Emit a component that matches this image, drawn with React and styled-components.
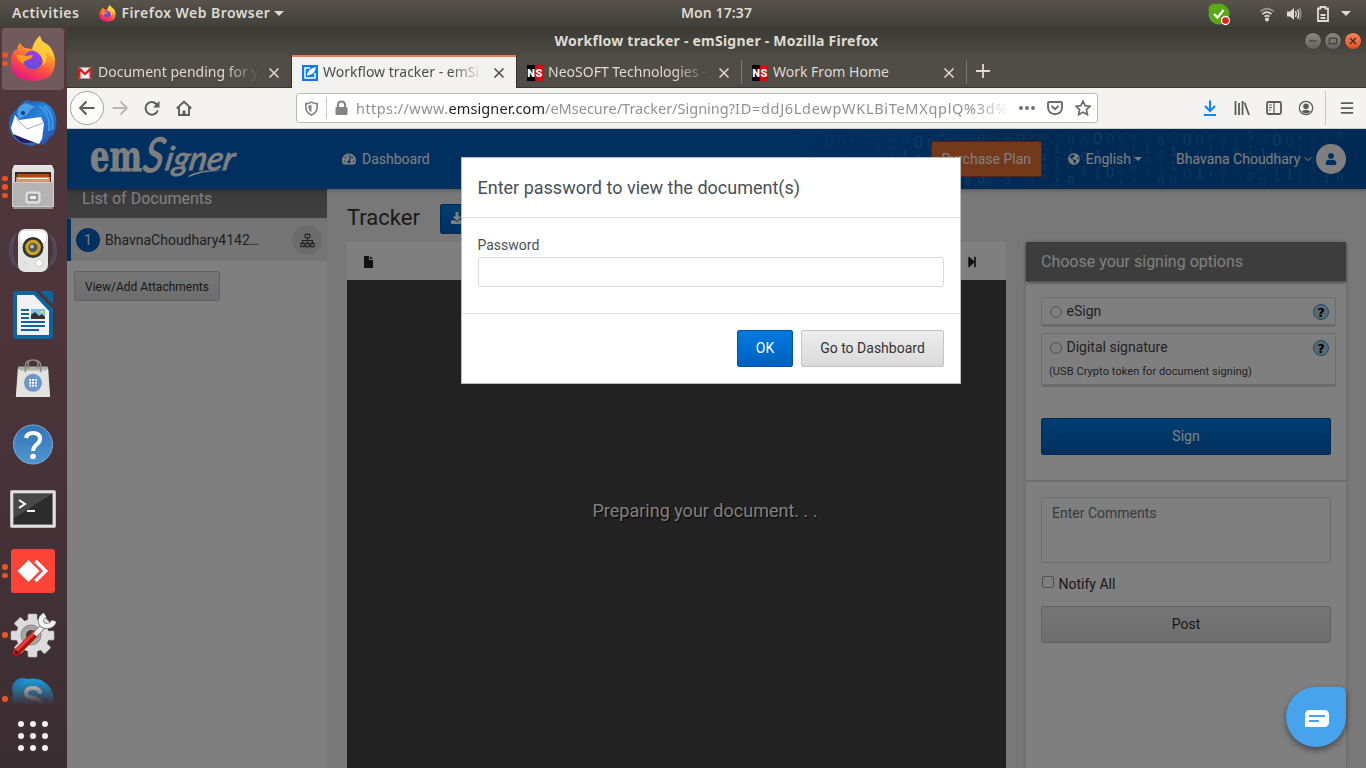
import React from "react";
import styled, { createGlobalStyle } from "styled-components";
import { FaTachometerAlt, FaGlobeAmericas, FaUser, FaDownload, FaStepForward } from "react-icons/fa";

const ui = `"Noto Sans", "Open Sans", sans-serif`;

const GlobalStyle = createGlobalStyle`
  * { box-sizing: border-box; }
  html, body { margin: 0; padding: 0; }
  body { width: 1366px; height: 768px; overflow: hidden; font-family: Roboto, sans-serif; font-size: 14px; }
  button, input, textarea { font-family: inherit; margin: 0; }
  svg { display: block; flex: none; }
`;

/* ---------- desktop shell ---------- */
const Desktop = styled.div`
  width: 1366px; height: 768px; display: flex; flex-direction: column; overflow: hidden; background: #3a3935;
`;
const TopBar = styled.header`
  height: 27px; flex: none; display: grid; grid-template-columns: 681px auto 1fr; align-items: center;
  background: linear-gradient(#57534b, #403f3a); color: #dfdbd2; font: 600 14px ${ui};
`;
const TopLeft = styled.div`display: flex; align-items: center; padding-left: 12px;`;
const TopRight = styled.div`display: flex; align-items: center; justify-content: flex-end; padding-right: 15px;`;
const Label = styled.span`
  white-space: pre; letter-spacing: ${(p) => p.$ls || 0}px; margin-left: ${(p) => p.$ml || 0}px; line-height: 20px;
  padding-bottom: ${(p) => p.$pb || 0}px;
`;
const Caret = styled.i`
  width: 0; height: 0; border: ${(p) => p.$s || 5}px solid transparent; border-bottom: 0; border-top-color: currentColor;
  margin-left: ${(p) => p.$ml || 0}px;
`;
const Body = styled.div`flex: 1; min-height: 0; display: flex;`;
const Dock = styled.nav`
  width: 67px; flex: none; display: flex; flex-direction: column;
  background: linear-gradient(#52393d, #4a343a 45%, #3b2e33);
`;
const DockList = styled.div`height: 677px; overflow: hidden; position: relative;
  &::after { content: ""; position: absolute; left: 0; right: 0; bottom: 0; height: 26px; background: linear-gradient(rgba(62,47,52,0), #3f3035); }
`;
const DockItem = styled.div`
  height: 64px; display: flex; align-items: center; padding-left: 2px;
`;
const Dots = styled.div`
  width: 6px; flex: none; display: flex; flex-direction: column; gap: 3px; margin-right: -6px; z-index: 1;
  i { width: 5.5px; height: 5.5px; border-radius: 50%; background: #e95420; }
`;
const Tile = styled.div`
  width: 62px; height: 62px; border-radius: 4px; display: flex; align-items: center; justify-content: center;
  padding-top: ${(p) => p.$drop || 0}px;
  background: ${(p) => (p.$on ? "#705a5d" : "transparent")};
`;
const AppsButton = styled.div`
  height: 64px; display: grid; grid-template-columns: repeat(3, 6px); gap: 6px; place-content: center; padding-right: 2px;
  i { width: 6px; height: 6px; border-radius: 50%; background: #f2f1f0; }
`;

/* ---------- browser chrome ---------- */
const Window = styled.div`flex: 1; min-width: 0; display: flex; flex-direction: column;`;
const TitleBar = styled.div`
  height: 28px; flex: none; display: grid; grid-template-columns: 1fr auto 1fr; align-items: center;
  background: linear-gradient(#3a3935, #4c4a43); color: #dfdbd2; font: 700 14px ${ui};
`;
const WinButtons = styled.div`display: flex; gap: 4px; justify-content: flex-end; padding-right: 5px;`;
const WinButton = styled.div`
  width: 16px; height: 16px; border-radius: 50%; display: flex; align-items: center; justify-content: center;
  background: ${(p) => (p.$close ? "linear-gradient(#f5845b, #e2511f)" : "linear-gradient(#8a8880, #65635c)")};
  box-shadow: 0 0 0 .5px #2c2b28;
`;
const TabStrip = styled.div`
  height: 33px; flex: none; display: flex; background: #504d46; border-bottom: 1px solid #3a3833;
`;
const Tab = styled.div`
  width: 225px; flex: none; display: flex; align-items: center; padding: 0 12px 0 10px; font: 400 14px ${ui};
  color: ${(p) => (p.$active ? "#4c4c4c" : "#dfdbd2")};
  background: ${(p) => (p.$active ? "#f3f2f1" : "transparent")};
  border-top: 2px solid ${(p) => (p.$active ? "#ee7c52" : "transparent")};
  height: 33px;
  ${(p) => p.$active && "width: 224px; margin-right: 1px; padding-right: 11px; box-shadow: -1px 0 0 #33312d, 1px 0 0 #33312d;"}
`;
const TabText = styled.span`
  flex: 1; min-width: 0; white-space: pre; margin: 0 9px 0 5px; padding-bottom: 2px; line-height: 22px;
  ${(p) => p.$fade && "mask-image: linear-gradient(90deg, #000 calc(100% - 34px), transparent);"}
`;
const TabRule = styled.i`width: 1px; height: 24px; margin: 5px 0 0 -1px; background: #7b7870;`;
const NewTab = styled.div`width: 32px; display: flex; align-items: center; justify-content: center;`;
const NavBar = styled.div`
  height: 41px; flex: none; display: flex; align-items: center; background: #f4f3f2; border-bottom: 1px solid #cfcdca;
  color: #5c5c5b;
`;
const Slot = styled.div`
  width: ${(p) => p.$w || 32}px; flex: none; display: flex; align-items: center; justify-content: center; color: ${(p) => p.$c || "inherit"};
  margin-left: ${(p) => p.$ml || 0}px;
`;
const BackButton = styled.div`
  width: 34px; height: 34px; flex: none; margin: 0 0 0 3px; border-radius: 50%; border: 1px solid #a5a4a2; background: #fcfcfb; display: flex; align-items: center; justify-content: center;
`;
const UrlBox = styled.div`
  width: 802px; flex: none; height: 30px; margin: 0 96px; background: #fff; border: 1px solid #bfbcb9; border-radius: 3px;
  display: flex; align-items: center; color: #858484; font: 400 14.5px ${ui};
`;
const UrlText = styled.span`
  width: 654px; flex: none; white-space: pre; color: #929191; line-height: 24px; letter-spacing: .42px;
  mask-image: linear-gradient(90deg, #000 calc(100% - 36px), transparent);
  b { font-weight: 400; color: #1f1f1f; letter-spacing: .1px; }
  i { font-style: normal; letter-spacing: 0; }
  em { font-style: normal; letter-spacing: .7px; }
`;
const Rule = styled.i`width: 1px; height: ${(p) => p.$h}px; background: #c9c8c6; flex: none;`;

/* ---------- web page ---------- */
const Page = styled.div`
  flex: 1; min-height: 0; position: relative; overflow: hidden; display: flex; flex-direction: column; background: #f0f0f0; color: #333;
`;
const SiteHeader = styled.div`
  height: 60px; flex: none; display: flex; align-items: center; position: relative; background: #0060c0; color: #fff;
  box-shadow: 0 1px 4px rgba(0,0,0,.35); z-index: 1;
`;
const DigitArt = styled.svg`position: absolute; right: 0; top: 0;`;
const Logo = styled.div`width: 275px; flex: none; padding-left: 23px;`;
const NavLink = styled.div`display: flex; align-items: center; position: relative; margin-left: ${(p) => p.$ml || 0}px;`;
const PurchaseButton = styled.button`
  position: relative; width: 111px; height: 36px; margin-left: 501px; padding: 0; border: 1px solid #c03c0c; border-radius: 2px; background: #e87034; color: #fff; font-size: 14px;
`;
const Avatar = styled.div`
  width: 30px; height: 30px; margin-left: 4px; border-radius: 50%; background: #fff; color: #0060c0; display: flex; align-items: center; justify-content: center;
`;
const Chevron = styled.svg`margin-left: 4px;`;
const Content = styled.div`flex: 1; min-height: 0; display: flex;`;
const Sidebar = styled.aside`width: 260px; flex: none; background: #fff;`;
const SidebarHead = styled.div`
  height: 29px; padding: 0 15px; background: linear-gradient(#747474, #7e7e7e); color: #fff; font-size: 16px; line-height: 19px;
`;
const DocRow = styled.div`
  height: 43px; display: flex; align-items: center; padding-right: 5px; background: #ebebeb; border-left: 4px solid #0060c0; border-top: 1px solid #ddd; color: #404040;
`;
const Count = styled.span`
  width: 24px; height: 24px; margin: 0 5px; border-radius: 50%; background: #0060c0; color: #fff; text-align: center; line-height: 24px;
`;
const DocName = styled.span`flex: 1;`;
const RoundIcon = styled.span`
  width: 30px; height: 30px; border-radius: 50%; background: #d8d8d8; display: flex; align-items: center; justify-content: center;
`;
const GreyButton = styled.button`
  display: block; height: ${(p) => p.$h}px; width: ${(p) => p.$w}px; padding: ${(p) => p.$p || "0 0 2px"}; border: 1px solid #c4c4c4; border-radius: 2px;
  background: linear-gradient(#ededed, #dadada); color: #333; font-size: ${(p) => p.$fs || 14}px; margin: ${(p) => p.$m || 0};
`;
const BlueButton = styled.button`
  display: flex; align-items: center; justify-content: center; flex: none; height: ${(p) => p.$h}px; width: ${(p) => p.$w}px; padding: 0 0 2px; border: 1px solid #0052a6; border-radius: 2px;
  background: linear-gradient(#007be0, #0060c0); color: #fff; font-size: 14px;
`;
const Main = styled.main`width: 659px; margin-left: 20px; display: flex; flex-direction: column;`;
const TitleRow = styled.div`height: 53px; flex: none; display: flex; padding-top: 15px;`;
const PageTitle = styled.h1`margin: 0 20px 0 0; font-weight: 400; font-size: 22px; line-height: 27px; width: 73px; color: #333; white-space: nowrap;`;
const ViewerBar = styled.div`
  height: 38px; flex: none; display: flex; align-items: center; justify-content: space-between; padding: 2px 28px 0 17px; background: #fff; color: #222;
`;
const Viewer = styled.div`
  flex: 1; background: #444; color: #fff; font-size: 18px; text-align: center; padding: 221px 0 0 57px; line-height: 20px; text-shadow: 1px 1px 1px #000;
`;
const Panel = styled.section`
  width: 320px; margin: 53px 20px 0; background: #fff; display: flex; flex-direction: column; box-shadow: 0 0 4px rgba(0,0,0,.2);
`;
const PanelHead = styled.div`
  height: 39px; flex: none; padding: 0 15px; background: #7a7a7a; color: #fff; font-size: 16px; line-height: 39px; box-shadow: 0 2px 3px rgba(0,0,0,.4);
`;
const Options = styled.div`padding: 16px 10px 0 15px; height: 137px; display: flex; flex-direction: column; gap: 6px;`;
const Option = styled.div`
  height: ${(p) => p.$h}px; padding: 4px 6px 0 8px; border: 1px solid #dadada; border-bottom: 3px solid #d6d6d6; border-radius: 3px; color: #444; line-height: 17px;
`;
const OptionLine = styled.div`display: flex; align-items: center; > span { flex: 1; }`;
const Radio = styled.i`width: 12px; height: 12px; margin-right: 4.5px; margin-top: 2px; border: 1px solid #a2a2a2; border-radius: 50%;`;
const Help = styled.b`
  width: 16px; height: 16px; margin-top: 2px; border: 1px solid #3b93c4; border-radius: 50%; background: #b4d4ea; color: #000; font: 900 13px/15px "DejaVu Sans", sans-serif; text-align: center;
`;
const Hint = styled.div`font-size: 11px; line-height: 14px; margin: 9px 0 0 -1px; letter-spacing: .08px;`;
const Divided = styled.div`padding: 0 15px 25px; border-bottom: 2px solid #dadada;`;
const Comments = styled.div`padding: 15px;`;
const CommentBox = styled.div`height: 66px; border: 1px solid #d9d9d9; border-radius: 3px; padding: 7px 10px; line-height: 16px; color: #6c757d;`;
const Notify = styled.div`display: flex; height: 43px; padding: 12px 0 0 1px; gap: 4.5px; line-height: 18px;
  i { width: 12px; height: 12px; margin-top: 1px; border: 1px solid #9c9c9c; border-radius: 2px; }
`;
const Backdrop = styled.div`
  position: absolute; inset: 0; z-index: 2; background: rgba(0,0,0,.5); display: flex; justify-content: center; align-items: flex-start; padding: 28px 11px 0 0;
`;
const Dialog = styled.div`width: 500px; height: 227px; background: #fff; border: 1px solid #bcbcbc; color: #495057;`;
const DialogHead = styled.div`height: 60px; padding: 0 15.5px; font-size: 18px; line-height: 60px; border-bottom: 1px solid #dee2e6;`;
const DialogBody = styled.div`height: 96px; padding: 19px 16px 0 15.5px; border-bottom: 1px solid #dee2e6; line-height: 16px;`;
const PasswordInput = styled.input`display: block; width: 466.5px; height: 30px; margin-top: 4px; border: 1px solid #dadada; border-radius: 3px; background: #fff; outline: 0;`;
const DialogFoot = styled.div`display: flex; justify-content: flex-end; gap: 8px; padding: 16px;`;
const Chat = styled.div`
  position: absolute; z-index: 3; right: 20px; bottom: 21px; width: 60px; height: 60px; border-radius: 30px 6px 30px 30px; background: #47a3ec;
  box-shadow: 0 3px 6px rgba(0,0,0,.45); display: flex; align-items: center; justify-content: center; padding: 3px 0 0 2px;
`;

/* ---------- icons ---------- */
const FirefoxIcon = ({ size, id }) => (
  <svg width={size} height={size} viewBox="0 0 46 46">
    <defs>
      <linearGradient id={id + "a"} x1=".8" y1="0" x2=".3" y2="1"><stop offset="0" stopColor="#fff44f" /><stop offset=".35" stopColor="#ffa027" /><stop offset=".65" stopColor="#ff4f40" /><stop offset="1" stopColor="#e31587" /></linearGradient>
      <linearGradient id={id + "b"} x1=".7" y1="0" x2=".3" y2="1"><stop offset="0" stopColor="#a23be0" /><stop offset="1" stopColor="#5b50dd" /></linearGradient>
    </defs>
    <path fill={`url(#${id}a)`} d="M10 7q2 4 5 5l7 1Q24 4 30 0q1 6 8 9 7 6 7 17 0 19-22 19T1 26q0-9 5-13l1 2q0-5 3-8z" />
    <circle cx="23" cy="24" r="9.500" fill={`url(#${id}b)`} />
    <path fill="#ffcf3f" d="M30 0q1 6 8 9 6 6 7 17-3-8-9-9 2 8-3 13 1-12-11-16 3-9 8-14z" opacity=".85" />
    <path fill="#ff9a22" d="M6 19q5-1 9 1l8-1q-1 4-6 5-4 1-4 4-5-3-7-9z" />
  </svg>
);
const Thunderbird = () => (
  <svg width="50" height="50" viewBox="0 0 50 50">
    <defs><linearGradient id="tb" x1="0" y1="0" x2="1" y2="1"><stop offset="0" stopColor="#1553a4" /><stop offset=".5" stopColor="#2a83d8" /><stop offset="1" stopColor="#2447a4" /></linearGradient></defs>
    <path fill="url(#tb)" d="M12 8Q15 1 23 2l-2 2q20-4 26 12 4 13-3 23l-2-1q-3 8-9 9l-1-2-8 3Q8 46 3 35-2 22 6 14z" />
    <path fill="#2b1b66" d="M4 34q4 9 12 11l18-1-20-9z" />
    <path fill="#fff" d="M7 17l4 5 22-3 3 7-2 15-3 5q-14-5-26-10l-2-6z" />
    <path fill="none" stroke="#8b94a3" strokeWidth=".8" d="M8 20l11 11 16-6" />
    <path fill="#4aa0e4" d="M11 21l-2-6q1-8 9-10l10 4q-6 1-8 7z" />
    <circle cx="15" cy="15" r="2" fill="#173b74" />
    <path fill="none" stroke="#3aa0ec" strokeWidth="2" d="M31 8q12 7 10 25M36 8q11 9 8 24" />
  </svg>
);
const Files = () => (
  <svg width="42" height="44" viewBox="0 0 42 44">
    <defs><linearGradient id="fl" x1="0" y1="0" x2="0" y2="1"><stop offset="0" stopColor="#e6e6e6" /><stop offset="1" stopColor="#b0b0b0" /></linearGradient></defs>
    <path fill="url(#fl)" d="M2 0h38l2 5v37H0V5z" />
    <path fill="#3b2a22" d="M3 7h36v10H3z" /><path fill="#b8440f" d="M5 9h32v3H5z" /><path fill="#ee8f4c" d="M4 12h34v5H4z" /><path stroke="#fff" d="M6 13.500h30" />
    <path fill="#b4b4b4" d="M0 17h42v25H0z" /><path fill="none" stroke="#cfcfcf" d="M.5 17.500h41v24H.5z" /><path fill="#8c8c8c" d="M1 42h40v2H1z" />
    <rect x="14" y="27" width="14" height="11" rx="2" fill="#d4d4d4" stroke="#e7e7e7" /><rect x="17" y="30" width="8" height="5" fill="#eee" stroke="#555" />
  </svg>
);
const Speaker = () => (
  <svg width="50" height="46" viewBox="0 0 50 46">
    <g fill="none" stroke="#5e6d8e" strokeWidth="1.600" opacity=".45"><path d="M8 6q-9 17 2 34M5 9q-7 14 1 28M42 6q9 17-2 34M45 9q7 14-1 28" /></g>
    <rect x="10" y="1" width="30" height="43" rx="7" fill="#e4e4e2" /><rect x="12" y="3" width="26" height="12" rx="5" fill="#fff" />
    <circle cx="25" cy="19.500" r="10.500" fill="#333" /><circle cx="25" cy="19.500" r="7.800" fill="#c9a21d" /><circle cx="25" cy="19.500" r="4.500" fill="#555" /><circle cx="24" cy="18.500" r="2" fill="#bbb" />
    <circle cx="31" cy="35" r="3.500" fill="#fff" stroke="#ccc" /><circle cx="17" cy="36" r="2.500" fill="#ddd" />
  </svg>
);
const Writer = () => (
  <svg width="42" height="50" viewBox="0 0 42 50">
    <path fill="#0e659e" d="M3 1h20l18 18v27q0 3-3 3H4q-3 0-3-3V3q0-2 2-2z" /><path fill="#f2f2f2" d="M5 5h17l15 16v24H5z" /><path fill="#0e659e" d="M28 1h11q2 0 2 2v11z" />
    <path stroke="#0e659e" strokeWidth="2" d="M9 20h8M9 24h8M9 28h8M9 32h24M9 36h24M9 40h18" /><rect x="19" y="19" width="14" height="10" fill="#7fc0ea" /><path fill="#333" d="M19 29v-4l4-3 4 4 3-2 3 3v2z" /><circle cx="30" cy="22" r="1.500" fill="#f7d64a" />
  </svg>
);
const Bag = () => (
  <svg width="38" height="44" viewBox="0 0 40 46">
    <path fill="#c8c8c4" d="M5 10h30l3 32H2z" /><path fill="#e2e3de" d="M4 12h32l2 30H2z" /><path fill="#aeb0aa" d="M4 10h32l-2 4H6z" />
    <path fill="none" stroke="#888a84" strokeWidth="1.600" d="M12 16V9q0-6 8-6t8 6v7M15 12V6q0-3 5-3t5 3v6" />
    <circle cx="20" cy="27" r="9.500" fill="#6f97c8" />
    {[0, 1, 2].map((r) => [0, 1, 2].map((c) => <rect key={r + "" + c} x={16 + c * 3} y={23 + r * 3} width="2" height="2" fill="#fff" />))}
  </svg>
);
const HelpIcon = () => (
  <svg width="42" height="42" viewBox="0 0 42 42">
    <defs><linearGradient id="hp" x1="0" y1="0" x2="0" y2="1"><stop offset="0" stopColor="#3373b8" /><stop offset="1" stopColor="#4f96cf" /></linearGradient></defs>
    <circle cx="21" cy="20.500" r="19.500" fill="url(#hp)" stroke="#7bb0dc" />
    <path fill="none" stroke="#fff" strokeWidth="4" d="M14 14q1-5 7-5 7 0 7 6 0 3-4 6-3 3-3 6" /><circle cx="21" cy="32.500" r="2.800" fill="#fff" />
  </svg>
);
const TerminalIcon = () => (
  <svg width="46" height="38" viewBox="0 0 46 38">
    <rect x=".5" y=".5" width="45" height="37" rx="1" fill="#e1e1e1" stroke="#bbb" /><rect x="3.500" y="3.500" width="39" height="31" fill="#2c2c2c" stroke="#777" /><path fill="#484848" d="M4 4h38L4 28z" />
    <path fill="none" stroke="#fff" strokeWidth="2" d="M9 10l6 4-6 4M17 21h8" />
  </svg>
);
const AnyDesk = () => (
  <svg width="44" height="44" viewBox="0 0 44 44"><rect width="44" height="44" rx="3" fill="#fb4338" /><path fill="#fff" d="M17.500 11l11 11-11 11-11-11z" /><path fill="none" stroke="#fff" strokeWidth="3.500" d="M24.500 12l10 10-10 10" /></svg>
);
const Tools = () => (
  <svg width="46" height="46" viewBox="0 0 46 46">
    <g fill="#dcdcdc" stroke="#b5b5b5" strokeWidth=".6">{[0, 45, 90, 135, 180, 225, 270, 315].map((a) => <rect key={a} x="18" y="2" width="9" height="9" rx="1" transform={`rotate(${a} 22.500 23.500)`} />)}<circle cx="22.500" cy="23.500" r="16.500" stroke="none" /></g>
    <circle cx="21" cy="23" r="10" fill="#a5a5a5" stroke="#858585" /><circle cx="21" cy="23" r="5" fill="#4a3a3e" />
    <path stroke="#b0120d" strokeWidth="7" strokeLinecap="round" d="M6 41L25 22" /><path stroke="#e0423a" strokeWidth="3" strokeLinecap="round" d="M5 40L24 21" />
    <path stroke="#777" strokeWidth="6" d="M26 22l8-9" /><path stroke="#ececec" strokeWidth="4.500" d="M25 23l9-10" />
    <path fill="none" stroke="#777" strokeWidth="6" d="M35 3q-5 3-4 7t6 4q5 0 7-5" /><path fill="none" stroke="#f2f2f2" strokeWidth="4.500" d="M35 3q-5 3-4 7t6 4q5 0 7-5" /><circle cx="6" cy="40" r="1.500" fill="#400" />
  </svg>
);
const SkypeIcon = () => (
  <svg width="44" height="44" viewBox="0 0 44 44">
    <circle cx="12" cy="12" r="11" fill="#1d8fd8" /><circle cx="22" cy="22" r="20.500" fill="#16a3e0" /><circle cx="32" cy="32" r="11" fill="#0c86c8" />
    <path fill="none" stroke="#e8eef2" strokeWidth="4" strokeLinecap="round" d="M29 15q-2-4-7-4-7 0-7 5 0 4 7 5 8 2 8 6 0 6-8 6-6 0-8-5" />
  </svg>
);
const dockApps = [
  { icon: <FirefoxIcon size={46} id="fxd" />, dots: 2, on: true }, { icon: <Thunderbird />, dots: 0 }, { icon: <Files />, dots: 3 }, { icon: <Speaker />, dots: 0 },
  { icon: <Writer />, dots: 0 }, { icon: <Bag />, dots: 0 }, { icon: <HelpIcon />, dots: 0, drop: 3 }, { icon: <TerminalIcon />, dots: 0, drop: 4 },
  { icon: <AnyDesk />, dots: 2 }, { icon: <Tools />, dots: 1 }, { icon: <SkypeIcon />, dots: 1 },
];

const Svg = ({ s = 16, w = 2, children, ...rest }) => (
  <svg width={s} height={s} viewBox="0 0 16 16" fill="none" stroke="currentColor" strokeWidth={w} {...rest}>{children}</svg>
);
const CloseX = () => <Svg s={12} w={2.1}><path d="M2 2l12 12M14 2L2 14" /></Svg>;
const Gmail = () => (
  <svg width="16" height="16" viewBox="0 0 16 16"><path fill="#f2f2f2" d="M1 2.500h14v11H1z" /><path fill="#d5201f" d="M1 2.500h2l5 5 5-5h2v11h-2.500v-7L8 10.500l-4.500-4v7H1z" /></svg>
);
const EmSignerFav = () => (
  <svg width="16" height="16" viewBox="0 0 16 16"><rect width="16" height="16" fill="#0a7cf0" /><path fill="none" stroke="#fff" strokeWidth="1.500" d="M8 3H3v10h10V8" /><path fill="#fff" d="M5 11q0-7 9-9-1 7-7 8z" /></svg>
);
const NsMark = styled.span`
  width: 16px; height: 16px; flex: none; display: flex; background: linear-gradient(90deg, #000 50%, #e3000f 50%); color: #fff; font: 900 11px/17px Roboto, sans-serif;
  i { width: 8px; text-align: center; font-style: normal; }
`;
const Ns = () => <NsMark><i>N</i><i>S</i></NsMark>;

/* binary rain behind the right half of the site header */
const digits = [];
for (let c = 0; c < 44; c++) {
  const size = [10, 16, 9, 13, 8, 12, 15][(c * 5) % 7];
  let y = size * 0.85 + 1 + ((c * 7) % 6);
  for (let r = 0; y < 58; r++) {
    const fade = Math.min(1, (c + 2) / 14);
    digits.push({ x: 20 + c * 12.8, y, size, v: (c * 3 + r * r + r * c) % 3 === 0 ? "0" : "1", o: (0.17 + ((c * 11 + r * 5) % 7) * 0.036) * fade });
    y += size * 1.12;
  }
}

export default function App() {
  return (
    <Desktop>
      <GlobalStyle />
      <TopBar>
        <TopLeft>
          <Label $ls={0.5} $pb={1}>Activities</Label>
          <Slot $w={16} $ml={20}><FirefoxIcon size={17} id="fxt" /></Slot>
          <Label $ml={6} $ls={0.45} $pb={1}>Firefox Web Browser</Label>
          <Caret $ml={4} />
        </TopLeft>
        <Label $ls={0.1} $pb={2}>Mon 17:37</Label>
        <TopRight>
          <svg width="24" height="24" viewBox="0 0 24 24"><circle cx="7.500" cy="7.500" r="6" fill="#5aa818" /><circle cx="12" cy="12" r="10.500" fill="#5aa818" /><path fill="none" stroke="#fff" strokeWidth="2.200" d="M7 12l3.500 3.500L16.500 8" /><circle cx="18.500" cy="18.500" r="4" fill="#ee1c1c" stroke="#fff" strokeWidth="1.300" /></svg>
          <Slot $w={16} $ml={28}><svg width="16" height="16" viewBox="0 0 16 16" fill="none" stroke="#dfdbd2" strokeWidth="1.700"><path opacity=".5" d="M1.500 5.500q6.500-5.500 13 0" /><path d="M3.500 8.200q4.500-4 9 0M5.500 10.600q2.500-2 5 0" /><circle cx="8" cy="13.500" r="1.200" fill="#dfdbd2" /></svg></Slot>
          <Slot $w={16} $ml={11}><svg width="16" height="16" viewBox="0 0 16 16" fill="none" stroke="#dfdbd2" strokeWidth="1.500"><path fill="#dfdbd2" stroke="none" d="M1 5.500h3L8 2v12L4 10.500H1z" /><path d="M9.500 5q1.500 3 0 6M11.500 3.500q2.500 4.500 0 9" /><path opacity=".45" d="M13.500 2q3 6 0 12" /></svg></Slot>
          <Slot $w={16} $ml={13}><svg width="14" height="16" viewBox="0 0 14 16" fill="none" stroke="#dfdbd2" strokeWidth="1.800"><path d="M2 2.500h2.500V1h5v1.500H12V15H2zM4.500 9h5M4.500 12h5" /></svg></Slot>
          <Caret $ml={10} />
        </TopRight>
      </TopBar>
      <Body>
        <Dock>
          <DockList>
            {dockApps.map((a, i) => (
              <DockItem key={i}>
                <Dots>{Array.from({ length: a.dots }, (_, k) => <i key={k} />)}</Dots>
                <Tile $on={a.on} $drop={a.drop}>{a.icon}</Tile>
              </DockItem>
            ))}
          </DockList>
          <AppsButton>{Array.from({ length: 9 }, (_, k) => <i key={k} />)}</AppsButton>
        </Dock>
        <Window>
          <TitleBar>
            <span />
            <Label $ls={0.24}>Workflow tracker - emSigner - Mozilla Firefox</Label>
            <WinButtons>
              <WinButton><Svg s={10} w={1.600} stroke="#33322e"><path d="M2 8h12" /></Svg></WinButton>
              <WinButton><Svg s={10} w={1.600} stroke="#33322e"><path d="M2 3.500h12v9H2z" /></Svg></WinButton>
              <WinButton $close><Svg s={8} w={2.400} stroke="#3b2a22"><path d="M2 2l12 12M14 2L2 14" /></Svg></WinButton>
            </WinButtons>
          </TitleBar>
          <TabStrip>
            <Tab><Gmail /><TabText $fade>Document pending for y</TabText><CloseX /></Tab>
            <Tab $active><EmSignerFav /><TabText $fade>Workflow tracker - emSi</TabText><CloseX /></Tab>
            <Tab><Ns /><TabText $fade>NeoSOFT Technologies -</TabText><CloseX /></Tab>
            <TabRule />
            <Tab><Ns /><TabText>Work From Home</TabText><CloseX /></Tab>
            <TabRule />
            <NewTab><Svg s={16} stroke="#dfdbd2" w={1.800}><path d="M8 1v14M1 8h14" /></Svg></NewTab>
          </TabStrip>
          <NavBar>
            <BackButton><Svg><path d="M15.500 8H1.500M7.500 1.500L1.200 8l6.300 6.500" /></Svg></BackButton>
            <Slot><Svg stroke="#b9b8b6"><path d="M.5 8h14M8.500 1.500L14.800 8l-6.300 6.500" /></Svg></Slot>
            <Slot><Svg><path d="M13.500 5.500A6.300 6.300 0 1 0 13.800 10.500" /><path fill="currentColor" stroke="none" d="M15.500 1v6.500H9z" /></Svg></Slot>
            <Slot><Svg w={1.900}><path d="M.8 8.500L8 1.500l7.200 7M3 7v8h10V7" /><path d="M8 15v-4.500" strokeWidth="2.800" /></Svg></Slot>
            <UrlBox>
              <Slot $w={29}><Svg s={15} w={1.800}><path d="M8 1.200q3 1.600 6 1.500v4Q14 12.500 8 15 2 12.500 2 6.700v-4q3 .1 6-1.500z" /><path fill="currentColor" stroke="none" d="M8 4v8q-3.500-2-3.500-7z" /></Svg></Slot>
              <Rule $h={22} />
              <Slot $w={29}><svg width="13" height="16" viewBox="0 0 13 16"><rect x=".5" y="7" width="12" height="8" rx="1" fill="#858484" /><path fill="none" stroke="#858484" strokeWidth="2" d="M3 8V5q0-3.500 3.500-3.500T10 5v3" /></svg></Slot>
              <UrlText>https://www.<b>emsigner.com</b><i>/eMsecure/Tracker/Signing?</i><em>ID=ddJ6LdewpWKLBiTeMXqplQ%3d%</em></UrlText>
              <Slot $w={34}><svg width="16" height="4" viewBox="0 0 16 4" fill="#6c6c6b"><circle cx="2" cy="2" r="1.900" /><circle cx="8" cy="2" r="1.900" /><circle cx="14" cy="2" r="1.900" /></svg></Slot>
              <Slot $w={22} $c="#6c6c6b"><Svg w={1.900}><path d="M2 2h12q1 0 1 1v4q0 6.500-7 7.200Q1 13.500 1 7V3q0-1 1-1z" /><path d="M4.500 6L8 9.300 11.500 6" /></Svg></Slot>
              <Slot $w={34} $c="#6c6c6b"><Svg w={1.700}><path d="M8 1l2.100 4.600 5 .6-3.700 3.400 1 5L8 12.200l-4.400 2.400 1-5L.9 6.200l5-.6z" /></Svg></Slot>
            </UrlBox>
            <Slot $c="#0a84ff"><Svg><path d="M8 .5v10M3 6l5 5 5-5M2 15h12" /></Svg></Slot>
            <Slot><Svg><path d="M1.500 1v14M5 3v12M8.500 1v14M10.500 2.500L15 15" strokeWidth="1.800" /></Svg></Slot>
            <Slot><Svg w={1.800}><rect x="1" y="2" width="14" height="12" rx="1.500" /><path d="M8 2v12M3 5h3M3 7.500h3M3 10h2" strokeWidth="1.200" /></Svg></Slot>
            <Slot><Svg w={1.300}><circle cx="8" cy="8" r="6.700" /><circle cx="8" cy="6.200" r="2.800" fill="currentColor" stroke="none" /><path d="M3.500 11.500q4.500-3.500 9 0-4.500 4-9 0z" fill="currentColor" stroke="none" /></Svg></Slot>
            <Slot $w={3} /><Rule $h={34} />
            <Slot $w={41}><Svg s={14} w={2}><path d="M1 2.500h14M1 8h14M1 13.500h14" /></Svg></Slot>
          </NavBar>
          <Page>
            <SiteHeader>
              <DigitArt width="600" height="60" viewBox="0 0 600 60" aria-hidden="true">
                <defs><linearGradient id="dim"><stop offset="0" stopColor="#0060c0" stopOpacity="0" /><stop offset=".45" stopColor="#0055a8" /><stop offset="1" stopColor="#0054a8" /></linearGradient></defs>
                <rect width="600" height="60" fill="url(#dim)" />
                <g fill="#6ab4ff" fontFamily="Liberation Sans">{digits.map((d, i) => <text key={i} x={d.x} y={d.y} fontSize={d.size} opacity={d.o}>{d.v}</text>)}</g>
              </DigitArt>
              <Logo>
                <svg width="150" height="56" viewBox="0 0 150 56" fill="#fff">
                  <text x="0" y="40" fontFamily="DejaVu Serif" fontWeight="700" fontSize="43" textLength="52" lengthAdjust="spacingAndGlyphs" stroke="#fff" strokeWidth=".8">em</text>
                  <g transform="translate(7 0) skewX(-10)" stroke="#fff" strokeWidth=".9">
                    <text x="52" y="41" fontFamily="Lato" fontStyle="italic" fontSize="48" textLength="20" lengthAdjust="spacingAndGlyphs">S</text>
                    <text x="74" y="39" fontFamily="Lato" fontStyle="italic" fontSize="33" textLength="69" lengthAdjust="spacing">igner</text>
                  </g>
                  <path d="M98 45q14-8 36-5-20-1-35 6z" />
                </svg>
              </Logo>
              <NavLink><FaTachometerAlt size={14} /><Label $ml={6}>Dashboard</Label></NavLink>
              <PurchaseButton>Purchase Plan</PurchaseButton>
              <NavLink $ml={26}><FaGlobeAmericas size={12} /><Label $ml={6}>English</Label><Caret $s={4} $ml={3} /></NavLink>
              <NavLink $ml={34}><Label>Bhavana Choudhary</Label><Chevron width="8" height="8" viewBox="0 0 16 16" fill="none" stroke="currentColor" strokeWidth="2"><path d="M1 5l7 6 7-6" /></Chevron><Avatar><FaUser size={12} /></Avatar></NavLink>
            </SiteHeader>
            <Content>
              <Sidebar>
                <SidebarHead>List of Documents</SidebarHead>
                <DocRow>
                  <Count>1</Count><DocName>BhavnaChoudhary4142…</DocName>
                  <RoundIcon><Svg s={15} w={1.200}><path d="M5.500 1.500h5v3.500h-5zM1 11h3.500v3.500H1zM6.200 11h3.500v3.500H6.200zM11.500 11H15v3.500h-3.500zM8 5v6M2.700 11V8h10.500v3" /></Svg></RoundIcon>
                </DocRow>
                <GreyButton $w={146} $h={30} $fs={12} $m="10px 7px" $p="1px 0 0">View/Add Attachments</GreyButton>
              </Sidebar>
              <Main>
                <TitleRow><PageTitle>Tracker</PageTitle><BlueButton $w={34} $h={30}><FaDownload size={12} /></BlueButton></TitleRow>
                <ViewerBar>
                  <svg width="9" height="12" viewBox="0 0 9 12"><path fill="#222" d="M0 0h5v4h4v8H0zM6 0l3 3H6z" /></svg>
                  <FaStepForward size={12} />
                </ViewerBar>
                <Viewer>Preparing your document. . .</Viewer>
              </Main>
              <Panel>
                <PanelHead>Choose your signing options</PanelHead>
                <Options>
                  <Option $h={30}><OptionLine><Radio /><span>eSign</span><Help>?</Help></OptionLine></Option>
                  <Option $h={54}><OptionLine><Radio /><span>Digital signature</span><Help>?</Help></OptionLine><Hint>(USB Crypto token for document signing)</Hint></Option>
                </Options>
                <Divided><BlueButton $w={290} $h={37}>Sign</BlueButton></Divided>
                <Comments>
                  <CommentBox>Enter Comments</CommentBox>
                  <Notify><i />Notify All</Notify>
                  <GreyButton $w={290} $h={37}>Post</GreyButton>
                </Comments>
              </Panel>
            </Content>
            <Backdrop>
              <Dialog>
                <DialogHead>Enter password to view the document(s)</DialogHead>
                <DialogBody>Password<PasswordInput type="password" /></DialogBody>
                <DialogFoot><BlueButton $w={56} $h={37}>OK</BlueButton><GreyButton $w={143} $h={37}>Go to Dashboard</GreyButton></DialogFoot>
              </Dialog>
            </Backdrop>
            <Chat>
              <svg width="24" height="18" viewBox="0 0 24 18"><path fill="#fff" d="M5 0h14q5 0 5 5v7q0 5-5 5H0V5q0-5 5-5z" /><path stroke="#47a3ec" strokeWidth="2" d="M4 6h16M4 11h10" /></svg>
            </Chat>
          </Page>
        </Window>
      </Body>
    </Desktop>
  );
}
